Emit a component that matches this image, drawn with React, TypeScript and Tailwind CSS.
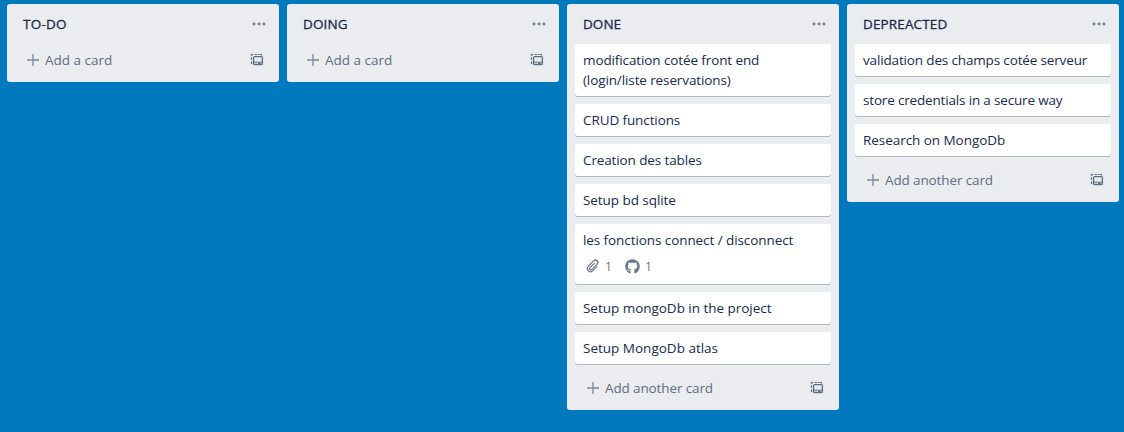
import { FaGithub } from "react-icons/fa";

type Card = { lines: { text: string; tracking: string }[]; badges?: boolean };
type List = { title: string; tracking: string; cards: Card[] };

const single = (text: string, tracking: string, badges = false): Card => ({
  lines: [{ text, tracking }],
  badges,
});

const lists: List[] = [
  { title: "TO-DO", tracking: "tracking-[0.25px]", cards: [] },
  { title: "DOING", tracking: "tracking-[0.15px]", cards: [] },
  {
    title: "DONE",
    tracking: "tracking-[0.05px]",
    cards: [
      {
        lines: [
          { text: "modification cotée front end", tracking: "tracking-[-0.11px]" },
          { text: "(login/liste reservations)", tracking: "tracking-[-0.11px]" },
        ],
      },
      single("CRUD functions", "tracking-[-0.1px]"),
      single("Creation des tables", "tracking-[-0.12px]"),
      single("Setup bd sqlite", "tracking-[-0.06px]"),
      single("les fonctions connect / disconnect", "tracking-[-0.08px]", true),
      single("Setup mongoDb in the project", "tracking-[-0.03px]"),
      single("Setup MongoDb atlas", "tracking-normal"),
    ],
  },
  {
    title: "DEPREACTED",
    tracking: "tracking-[0.13px]",
    cards: [
      single("validation des champs cotée serveur", "tracking-[-0.15px]"),
      single("store credentials in a secure way", "tracking-[-0.17px]"),
      single("Research on MongoDb", "tracking-[-0.05px]"),
    ],
  },
];

function MoreIcon() {
  return (
    <svg width="14" height="4" viewBox="0 0 14 4" fill="currentColor">
      <circle cx="2" cy="2" r="1.4" />
      <circle cx="7" cy="2" r="1.4" />
      <circle cx="12" cy="2" r="1.4" />
    </svg>
  );
}

function TemplateIcon() {
  return (
    <svg width="14" height="14" viewBox="0 0 14 14" fill="none" stroke="currentColor">
      <path d="M1 1.5h2.2M4.4 1.5h2.8M8.4 1.5h2.2M1.5 1v2M1.5 4.3v2.6M1.5 8.2v2.2M1 10.5h1.2M11.4 1v1.4" strokeWidth="1.1" />
      <rect x="3.6" y="3.6" width="8.8" height="7.9" rx="1" strokeWidth="1.3" />
      <path d="M4 9.2h8" strokeWidth="1" />
      <path d="M8 10.4h2.5" strokeWidth="1.3" />
    </svg>
  );
}

function ClipIcon() {
  return (
    <svg width="14" height="14" viewBox="0 0 14 14" fill="none" stroke="currentColor" strokeWidth="1.2" strokeLinecap="round" strokeLinejoin="round">
      <path d="M10.9 7.7 7 11.6a3.15 3.15 0 0 1-4.7-4.5l5.3-5.2a2.35 2.35 0 0 1 3.5 3.3l-5.2 5.2a1.3 1.3 0 0 1-1.9-1.8l4.3-4.3" />
    </svg>
  );
}

function CardItem({ card }: { card: Card }) {
  return (
    <article className={`rounded-[3px] bg-white px-2 pt-1.5 shadow-[0_1px_0_#091e4240] ${card.badges ? "h-[60px]" : "pb-1.5"}`}>
      {card.lines.map((line) => (
        <p key={line.text} className={`whitespace-nowrap leading-5 ${line.tracking}`}>
          {line.text}
        </p>
      ))}
      {card.badges && (
        <div className="flex h-8 items-center pl-[3px] text-xs text-[#6b778c]">
          <ClipIcon />
          <span className="ml-[5px] translate-y-px">1</span>
          <FaGithub size={15} className="ml-[13px]" />
          <span className="ml-[5px] translate-y-px">1</span>
        </div>
      )}
    </article>
  );
}

function ListColumn({ list }: { list: List }) {
  const hasCards = list.cards.length > 0;
  return (
    <section className="w-[272px] shrink-0 rounded-[3px] bg-[#ebecf0] px-2 pb-1.5">
      <header className="flex h-10 items-center justify-between px-2">
        <h2 className={`[-webkit-text-stroke:0.3px_#172b4d] ${list.tracking}`}>{list.title}</h2>
        <button className="-mr-[3px] text-[#6b778c]" aria-label="List actions">
          <MoreIcon />
        </button>
      </header>
      {hasCards && (
        <div className="mb-2 flex flex-col gap-2">
          {list.cards.map((card) => (
            <CardItem key={card.lines[0].text} card={card} />
          ))}
        </div>
      )}
      <footer className="flex h-8 items-center justify-between pl-3 pr-2 text-[#5e6c84]">
        <button className="flex items-center gap-[6px]">
          <svg width="12" height="12" viewBox="0 0 12 12" fill="none" stroke="#7a869a" strokeWidth="1.3">
            <path d="M6 0v12M0 6h12" />
          </svg>
          <span className={hasCards ? "tracking-[-0.12px]" : "tracking-normal"}>
            {hasCards ? "Add another card" : "Add a card"}
          </span>
        </button>
        <button className="-mr-[1px]" aria-label="Create from template">
          <TemplateIcon />
        </button>
      </footer>
    </section>
  );
}

export default function App() {
  return (
    <main className="flex h-[432px] items-start gap-2 overflow-hidden bg-[#0079bf] pl-[7px] pt-1 font-['Open_Sans','Noto_Sans',sans-serif] text-[13.5px] leading-5 text-[#172b4d]">
      {lists.map((list) => (
        <ListColumn key={list.title} list={list} />
      ))}
    </main>
  );
}
